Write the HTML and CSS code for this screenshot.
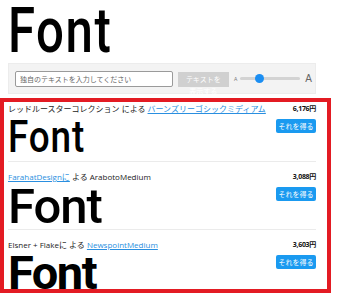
FILE: index.html
```html
<!DOCTYPE html>
<html lang="ja">
<head>
<meta charset="utf-8">
<link rel="stylesheet" href="styles.css">
</head>
<body>
<h1 class="hero"><span class="narrow">Font</span></h1>
<div class="toolbar">
  <input class="custom-text" type="text" placeholder="独自のテキストを入力してください">
  <button class="show-btn">テキストを表示する</button>
  <div class="size-control">
    <span class="a-small">A</span>
    <div class="track"><span class="thumb"></span></div>
    <span class="a-big">A</span>
  </div>
</div>
<div class="list">
  <div class="item first">
    <div class="main">
      <div class="meta">レッドルースターコレクション による <a href="#">バーンズリーゴシックミディアム</a></div>
      <div class="sample s1"><span class="narrow">Font</span></div>
    </div>
    <div class="side">
      <div class="price">6,176円</div>
      <button class="get">それを得る</button>
    </div>
  </div>
  <div class="item">
    <div class="main">
      <div class="meta"><a href="#">FarahatDesignに</a> よる ArabotoMedium</div>
      <div class="sample s2">Font</div>
    </div>
    <div class="side">
      <div class="price">3,088円</div>
      <button class="get">それを得る</button>
    </div>
  </div>
  <div class="item last">
    <div class="main">
      <div class="meta">Elsner + Flakeに よる <a href="#">NewspointMedium</a></div>
      <div class="sample s3">Font</div>
    </div>
    <div class="side">
      <div class="price">3,603円</div>
      <button class="get">それを得る</button>
    </div>
  </div>
</div>
</body>
</html>
```
FILE: styles.css
```css
html, body {
  margin: 0;
  padding: 0;
  background: #fff;
  overflow: hidden;
}
body {
  font-family: "Open Sans", "Noto Sans CJK JP", sans-serif;
  color: #222;
}
.narrow {
  display: inline-block;
  transform-origin: 0 50%;
}
.hero {
  margin: 0;
  padding: 0 0 0 8px;
  height: 63px;
  font-family: Roboto, sans-serif;
  font-weight: 500;
  font-size: 63px;
  line-height: 61px;
  letter-spacing: 2px;
  color: #000;
}
.hero .narrow {
  transform: scaleX(0.78);
}
.toolbar {
  margin-left: 8px;
  width: 308px;
  height: 31px;
  box-sizing: border-box;
  background: #f3f3f3;
  border: 1px solid #ececec;
  display: flex;
  align-items: center;
  padding: 0 3px 0 6px;
}
.custom-text {
  width: 160px;
  height: 16px;
  box-sizing: border-box;
  margin: 0;
  border: 1px solid #9a9a9a;
  border-radius: 2px;
  padding: 0 0 0 4px;
  font-family: "Noto Sans CJK JP", sans-serif;
  font-size: 7px;
  background: #fff;
}
.custom-text::placeholder {
  color: #666;
}
.show-btn {
  margin: 1px 0 0 5px;
  width: 52px;
  height: 15px;
  border: none;
  padding: 1px 8px 0;
  background: #d0d0d0;
  color: #fff;
  font-family: "Noto Sans CJK JP", sans-serif;
  font-size: 7px;
  line-height: 12px;
  overflow: visible;
  display: block;
  text-align: center;
  box-sizing: border-box;
}
.size-control {
  display: flex;
  align-items: center;
  margin-left: 5px;
  flex: 1;
}
.a-small {
  font-family: "Liberation Sans", sans-serif;
  font-size: 5px;
  color: #777;
  margin-right: 3px;
}
.track {
  position: relative;
  width: 60px;
  height: 3px;
  border-radius: 2px;
  background: #d3d3d3;
}
.thumb {
  position: absolute;
  left: 15px;
  top: -3px;
  width: 9px;
  height: 9px;
  border-radius: 50%;
  background: #1b8ef2;
}
.a-big {
  font-family: "Liberation Sans", sans-serif;
  font-size: 10px;
  color: #666;
  margin-left: 5px;
}
.list {
  margin-top: 4px;
  width: 331px;
  height: 195px;
  box-sizing: border-box;
  border: 4px solid #e31b23;
  padding: 0 11px 0 4px;
  overflow: hidden;
}
.item {
  display: flex;
  justify-content: space-between;
  border-bottom: 1px solid #ebebeb;
  padding-top: 9px;
  height: 68px;
  box-sizing: border-box;
}
.item.first {
  padding-top: 1px;
  height: 60px;
}
.main {
  display: flex;
  flex-direction: column;
}
.meta {
  font-size: 8px;
  line-height: 12px;
  color: #222;
  white-space: nowrap;
}
.meta a {
  color: #2a8fe0;
  text-decoration: underline;
}
.sample {
  color: #000;
  white-space: nowrap;
}
.s1 {
  font-family: Roboto, sans-serif;
  font-weight: 500;
  font-size: 45px;
  line-height: 44px;
  letter-spacing: 1px;
}
.s1 .narrow {
  transform: scaleX(0.82);
}
.s2 {
  font-family: Roboto, sans-serif;
  font-weight: 500;
  font-size: 49px;
  line-height: 48px;
  letter-spacing: -1px;
}
.s3 {
  font-family: Roboto, sans-serif;
  font-weight: 700;
  font-size: 47px;
  line-height: 44px;
  letter-spacing: -1.5px;
}
.side {
  display: flex;
  flex-direction: column;
  align-items: flex-end;
}
.price {
  font-size: 7px;
  font-weight: bold;
  line-height: 12px;
  color: #111;
  letter-spacing: -0.3px;
}
.get {
  margin-top: 4px;
  width: 40px;
  height: 14px;
  border: none;
  border-radius: 2px;
  background: #1a9af0;
  color: #fff;
  font-family: "Noto Sans CJK JP", sans-serif;
  font-size: 7px;
  padding: 0;
  line-height: 14px;
}
```
